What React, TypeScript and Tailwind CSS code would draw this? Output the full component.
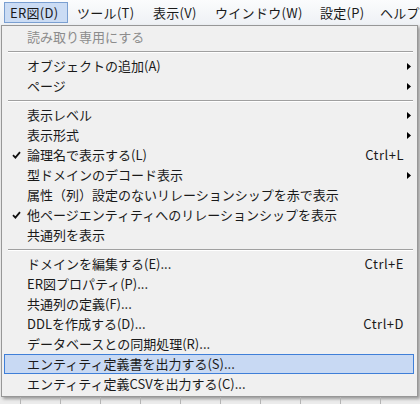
import React from 'react'

type Entry =
  | { kind: 'sep' }
  | {
      kind: 'item'
      label: string
      shortcut?: string
      arrow?: boolean
      checked?: boolean
      disabled?: boolean
      active?: boolean
    }

const entries: Entry[] = [
  { kind: 'item', label: '読み取り専用にする', disabled: true },
  { kind: 'sep' },
  { kind: 'item', label: 'オブジェクトの追加(A)', arrow: true },
  { kind: 'item', label: 'ページ', arrow: true },
  { kind: 'sep' },
  { kind: 'item', label: '表示レベル', arrow: true },
  { kind: 'item', label: '表示形式', arrow: true },
  { kind: 'item', label: '論理名で表示する(L)', shortcut: 'Ctrl+L', checked: true },
  { kind: 'item', label: '型ドメインのデコード表示', arrow: true },
  { kind: 'item', label: '属性（列）設定のないリレーションシップを赤で表示' },
  { kind: 'item', label: '他ページエンティティへのリレーションシップを表示', checked: true },
  { kind: 'item', label: '共通列を表示' },
  { kind: 'sep' },
  { kind: 'item', label: 'ドメインを編集する(E)...', shortcut: 'Ctrl+E' },
  { kind: 'item', label: 'ER図プロパティ(P)...' },
  { kind: 'item', label: '共通列の定義(F)...' },
  { kind: 'item', label: 'DDLを作成する(D)...', shortcut: 'Ctrl+D' },
  { kind: 'item', label: 'データベースとの同期処理(R)...' },
  { kind: 'item', label: 'エンティティ定義書を出力する(S)...', active: true },
  { kind: 'item', label: 'エンティティ定義CSVを出力する(C)...' },
]

// menu bar titles with the box widths measured from the screen
const menus = [
  { title: 'ER図(D)', w: 'w-[64px]' },
  { title: 'ツール(T)', w: 'w-[73px]' },
  { title: '表示(V)', w: 'w-[59px]' },
  { title: 'ウインドウ(W)', w: 'w-[102px]' },
  { title: '設定(P)', w: 'w-[57px]' },
  { title: 'ヘルプ(H)', w: 'w-[70px]' },
]

function Check() {
  return (
    <svg width="9" height="8" viewBox="0 0 9 8">
      <path d="M1 4.2 L3.4 6.6 L8 1.2" fill="none" stroke="#111" strokeWidth="1.8" />
    </svg>
  )
}

function Arrow() {
  return (
    <svg width="4" height="7" viewBox="0 0 4 7">
      <polygon points="0,0 4,3.5 0,7" fill="#000" />
    </svg>
  )
}

export default function App() {
  return (
    <div
      className="w-[420px] h-[404px] overflow-hidden bg-[#ececec] text-[13px] text-[#1a1a1a] flex flex-col"
      style={{ fontFamily: '"Noto Sans CJK JP", "Noto Sans", sans-serif' }}
    >
      {/* menu bar */}
      <div className="h-[25px] shrink-0 flex items-center gap-[3px] pl-[4px] bg-gradient-to-b from-[#fbfcfd] to-[#eef1f5] whitespace-nowrap">
        {menus.map((m, i) => (
          <div
            key={m.title}
            className={
              i === 0
                ? `${m.w} shrink-0 h-[21px] flex items-center px-[5px] border border-[#7a9fd1] bg-[#cbdcf4] leading-[19px] tracking-[0.3px]`
                : `${m.w} shrink-0 h-[21px] flex items-center px-[5px] border border-transparent leading-[19px] tracking-[0.3px]`
            }
          >
            {m.title}
          </div>
        ))}
      </div>

      {/* dropdown */}
      <div className="ml-[1px] w-[417px] shrink-0 bg-[#f0f0f0] border border-[#979797] pt-[1px] pb-[2px] pl-[2px] pr-[3px] shadow-[2px_2px_3px_rgba(0,0,0,0.35)]">
        {entries.map((e, i) =>
          e.kind === 'sep' ? (
            <div key={i} className="h-[9px] flex flex-col justify-center pl-[4px] pr-[1px]">
              <div className="h-[1px] bg-[#a0a0a0]" />
              <div className="h-[1px] bg-white" />
            </div>
          ) : (
            <div
              key={i}
              className={
                e.active
                  ? 'h-[20px] flex items-center border border-[#3f7fd8] bg-[#c8d9f3] leading-[18px]'
                  : 'h-[20px] flex items-center border border-transparent leading-[18px]'
              }
            >
              <div className="w-[22px] shrink-0 flex justify-center pl-[1px]">{e.checked && <Check />}</div>
              <div className={e.disabled ? 'flex-1 whitespace-nowrap text-[#8c8c8c]' : 'flex-1 whitespace-nowrap'}>
                {e.label}
              </div>
              <div className="whitespace-nowrap tracking-[0.5px]">{e.shortcut}</div>
              <div className="w-[9px] shrink-0 flex justify-center pl-[1px]">{e.arrow && <Arrow />}</div>
            </div>
          )
        )}
      </div>

      {/* canvas ruler underneath */}
      <div className="flex-1 flex pl-[20px] gap-[39px]">
        {Array.from({ length: 10 }).map((_, i) => (
          <div key={i} className="w-[1px] h-full bg-[#b4b4b4]" />
        ))}
      </div>
    </div>
  )
}
